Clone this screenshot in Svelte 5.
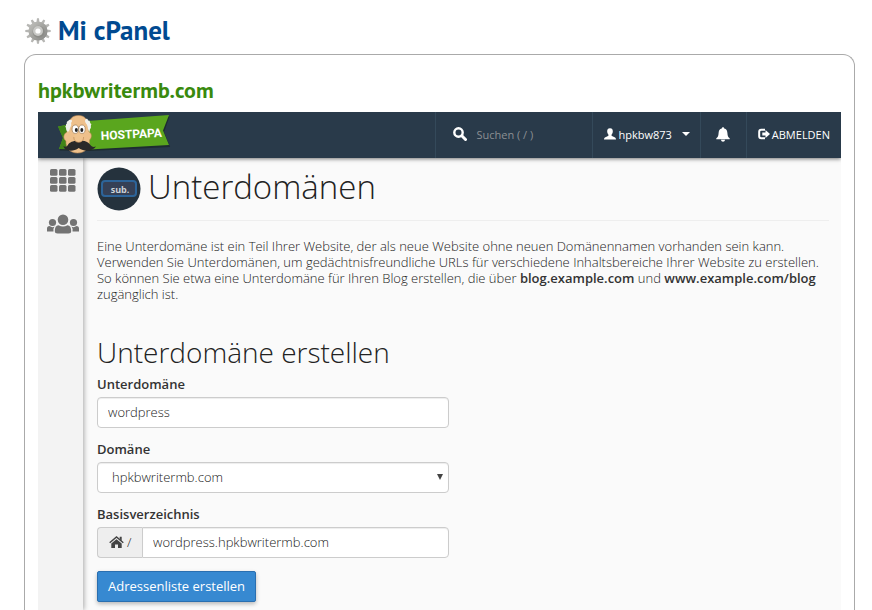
<svelte:options runes />

<script lang="ts">
  type Props = {
    domain?: string;
    user?: string;
  };
  let { domain = 'hpkbwritermb.com', user = 'hpkbw873' }: Props = $props();

  let subdomain = $state('wordpress');
  let root = $state('wordpress.hpkbwritermb.com');

  const teeth = Array.from({ length: 12 }, (_, i) => i * 30);
  const cells = [0, 9, 18];
</script>

<div class="page">
  <header class="title">
    <svg class="gear" viewBox="0 0 26 26" aria-hidden="true">
      <defs>
        <linearGradient id="metal" x1="0" y1="0" x2="1" y2="1">
          <stop offset="0" stop-color="#c4c4c0" />
          <stop offset="0.5" stop-color="#a3a39f" />
          <stop offset="1" stop-color="#858582" />
        </linearGradient>
      </defs>
      {#each teeth as angle}
        <path d="M11.4 5 L12 0.3 H14 L14.6 5Z" fill="#b6b6b3" transform="rotate({angle} 13 13)" />
      {/each}
      <circle cx="13" cy="13" r="9.6" fill="url(#metal)" />
      <circle cx="13.6" cy="13.8" r="6" fill="#83837f" opacity="0.6" />
      <circle cx="13" cy="13" r="5" fill="#c9c9c6" />
      <circle cx="13" cy="13" r="2.6" fill="#fff" />
    </svg>
    <h1>Mi cPanel</h1>
  </header>

  <section class="card">
    <h2 class="domain">{domain}</h2>

    <div class="panel">
      <nav class="topbar">
        <a class="brand" href="#home" aria-label="Home">
          <svg class="logo" viewBox="0 0 116 46">
            <path d="M2 15 L31 9 L113 3.5 L107.5 19 L113.5 34 L33 38 L3 37.5 L7 26Z" fill="#1d2c31" transform="translate(0.6 0.9)" />
            <path d="M2 14.5 L31 9 L113 3 L107 18.5 L113 33 L33 37.5 L3 37 L7 26Z" fill="#5aa61e" />
            <path d="M2 14.5 L12 13 V37 H3 L7 26Z" fill="#418518" />
            <path d="M13 14 C13 7 16 3.5 22.5 3.5 C29 3.5 32 8 32 14 L33 20 C36 21 36 26 33.5 28 C34 36 29 41 21.5 41 C14 41 9.5 36 10 29 C7 27 7 22 11 20Z" fill="#eec08b" stroke="#c18d58" stroke-width="0.6" />
            <path d="M12 20 C9 18 11 16 9 14.5 C11 14 9 12 11 11.5 C10 9 13 9 13 8 C16 7 17 9 15 11 C16 14 14 15 13.5 18Z" fill="#f1f1ed" />
            <path d="M29 9 C29 6 32 6 32 8.5 C35 8 33 11 35.5 12 C34 14 36 16 34 17 L33.5 20 C31.5 18 32 15 31 13 C31 12 29 11 29 9Z" fill="#f1f1ed" />
            <ellipse cx="19.3" cy="17.2" rx="3.2" ry="4.2" fill="#fff" stroke="#8a6a44" stroke-width="0.6" />
            <ellipse cx="26" cy="17.2" rx="3.2" ry="4.2" fill="#fff" stroke="#8a6a44" stroke-width="0.6" />
            <ellipse cx="20.3" cy="18" rx="1.5" ry="1.9" fill="#242424" />
            <ellipse cx="25.8" cy="18" rx="1.5" ry="1.9" fill="#242424" />
            <path d="M22.7 29.5 C17 28 13 31 11.5 33.5 C10.5 35 8.5 35 7.5 34 C8 39 17 40.5 22.7 36 C29 40.5 37 39 40 34.5 C37 35.5 35.5 34.5 34 32.5 C31 29 27 28 22.7 29.5Z" fill="#292929" />
            <ellipse cx="22.7" cy="26" rx="5" ry="4.3" fill="#f0c48f" />
            <path d="M17.8 25 Q17.8 30 22.7 30.3 Q27.6 30 27.6 25" fill="none" stroke="#bd8a58" stroke-width="0.7" />
            <text x="45" y="28" transform="rotate(-3 45 28)">HOSTPAPA</text>
          </svg>
        </a>
        <label class="item search">
          <svg class="glass" viewBox="0 0 14 14" aria-hidden="true">
            <circle cx="5.5" cy="5.5" r="4.2" fill="none" stroke="#fff" stroke-width="2.4" />
            <path d="M8.8 8.8 L12.5 12.5" stroke="#fff" stroke-width="3" stroke-linecap="round" />
          </svg>
          <input type="search" placeholder="Suchen ( / )" aria-label="Suchen" />
        </label>
        <button class="item user" type="button">
          <svg class="icon12" viewBox="0 0 12 12" aria-hidden="true">
            <path d="M6 0.3 C8.3 0.3 9 2 8.8 3.8 C8.7 5.3 8 6 7.5 6.8 C7.4 8 8 8.1 9.5 8.7 C11.2 9.3 12 9.7 12 11.5 H0 C0 9.7 0.8 9.3 2.5 8.7 C4 8.1 4.6 8 4.5 6.8 C4 6 3.3 5.3 3.2 3.8 C3 2 3.7 0.3 6 0.3Z" fill="#fff" />
          </svg>
          <span>{user}</span>
          <svg class="caret" viewBox="0 0 8 4" aria-hidden="true"><path d="M0 0H8L4 4Z" fill="#fff" /></svg>
        </button>
        <button class="item bell" type="button" aria-label="Benachrichtigungen">
          <svg viewBox="0 0 14 15">
            <path d="M7 0.3 C7.9 0.3 8.2 0.9 8.2 1.5 C10.5 2 11.3 3.8 11.4 6 C11.5 9 12.3 10.3 13.7 11.3 V12.3 H0.3 V11.3 C1.7 10.3 2.5 9 2.6 6 C2.7 3.8 3.5 2 5.8 1.5 C5.8 0.9 6.1 0.3 7 0.3Z M5 12.8 H9 C9 14 8 14.7 7 14.7 C6 14.7 5 14 5 12.8Z" fill="#fff" />
          </svg>
        </button>
        <a class="item logout" href="#logout">
          <svg class="icon12" viewBox="0 0 12 12" aria-hidden="true">
            <path d="M7 1.8 H3.2 Q1.2 1.8 1.2 3.8 V8.2 Q1.2 10.2 3.2 10.2 H7" fill="none" stroke="#fff" stroke-width="2" />
            <path d="M4.3 4.5 H7.5 V2 L12 6 L7.5 10 V7.5 H4.3Z" fill="#fff" />
          </svg>
          <span>ABMELDEN</span>
        </a>
      </nav>

      <div class="body">
        <aside class="sidebar">
          <a href="#apps" aria-label="Apps">
            <svg class="grid" viewBox="0 0 26 24">
              {#each cells as y}
                {#each cells as x}
                  <rect {x} y={y * 8 / 9} width="7.5" height="6.8" rx="1.5" fill="#737373" />
                {/each}
              {/each}
            </svg>
          </a>
          <a href="#users" aria-label="Users">
            <svg class="people" viewBox="0 0 32 20">
              <g fill="#737373">
                <circle cx="5.5" cy="8.5" r="3.6" />
                <circle cx="26.5" cy="8.5" r="3.6" />
                <path d="M0 17.5 V14.5 Q0 12 2.5 12 Q5.5 14 7.5 12.5 Q6 14.5 6.5 17.5Z" />
                <path d="M32 17.5 V14.5 Q32 12 29.5 12 Q26.5 14 24.5 12.5 Q26 14.5 25.5 17.5Z" />
                <circle cx="16" cy="5.8" r="5.3" />
                <path d="M7.8 17 Q7.8 11.5 11.5 11.2 Q16 14 20.5 11.2 Q24.2 11.5 24.2 17 Q24.2 19.5 21.5 19.5 H10.5 Q7.8 19.5 7.8 17Z" />
              </g>
            </svg>
          </a>
        </aside>

        <main>
          <div class="heading">
            <svg class="sub" viewBox="0 0 44 44" aria-hidden="true">
              <circle cx="22" cy="22" r="21.5" fill="#25323d" />
              <rect x="5" y="14" width="34" height="15" rx="3" fill="#354056" stroke="#2d6499" stroke-width="2" />
              <text x="23" y="26" text-anchor="middle">sub.</text>
            </svg>
            <h2>Unterdomänen</h2>
          </div>
          <p>
            Eine Unterdomäne ist ein Teil Ihrer Website, der als neue Website ohne neuen Domänennamen vorhanden sein kann.
            Verwenden Sie Unterdomänen, um gedächtnisfreundliche URLs für verschiedene Inhaltsbereiche Ihrer Website zu erstellen.
            So können Sie etwa eine Unterdomäne für Ihren Blog erstellen, die über <b>blog.example.com</b> und
            <b>www.example.com/blog</b> zugänglich ist.
          </p>

          <form onsubmit={(ev) => ev.preventDefault()}>
            <h3>Unterdomäne erstellen</h3>
            <label for="subdomain">Unterdomäne</label>
            <input id="subdomain" class="control" type="text" bind:value={subdomain} />

            <label for="domain">Domäne</label>
            <div class="select">
              <select id="domain" class="control">
                <option>{domain}</option>
              </select>
              <svg viewBox="0 0 6 6" aria-hidden="true"><path d="M0 0H6L3 6Z" fill="#444" /></svg>
            </div>

            <label for="root">Basisverzeichnis</label>
            <div class="group">
              <span class="addon">
                <svg viewBox="0 0 15 12" aria-hidden="true">
                  <path d="M0.7 6.7 L7.5 1 L14.3 6.7" fill="none" stroke="#444" stroke-width="1.5" />
                  <path d="M10.7 0.8 H12.7 V5 L10.7 3.3Z M7.5 3.2 L12.7 7.6 V12 H9 V8.5 H6 V12 H2.3 V7.6Z" fill="#444" />
                </svg>
                /
              </span>
              <input id="root" class="control" type="text" bind:value={root} />
            </div>

            <button class="submit" type="submit">Adressenliste erstellen</button>
          </form>
        </main>
      </div>
    </div>
  </section>
</div>

<style>
  :global(body) {
    background: #fff;
    overflow: hidden;
  }
  * {
    box-sizing: border-box;
  }
  h1,
  h2,
  h3,
  p {
    margin: 0;
  }
  svg {
    display: block;
    flex: none;
  }

  .page {
    height: 100vh;
    display: flex;
    flex-direction: column;
    padding: 8px 17px 0 24px;
    font-family: 'Open Sans', 'Liberation Sans', sans-serif;
    font-size: 13px;
    font-weight: 300;
    color: #222;
  }

  .title {
    display: flex;
    align-items: center;
    gap: 7px;
    height: 46px;
    padding-left: 1px;
    flex: none;
  }
  .gear {
    width: 26px;
    height: 26px;
  }
  h1 {
    padding-bottom: 2px;
    font: bold 27px/32px 'PT Sans', Lato, sans-serif;
    color: #004a91;
  }

  .card {
    flex: 1;
    min-height: 0;
    display: flex;
    flex-direction: column;
    padding: 23px 13px 0;
    border: 1px solid #aaa;
    border-bottom: 0;
    border-radius: 12px 12px 0 0;
  }
  .domain {
    flex: none;
    padding-bottom: 10px;
    font: bold 22px/24px 'PT Sans', Lato, sans-serif;
    color: #398a0e;
  }

  .panel {
    flex: 1;
    min-height: 0;
    display: flex;
    flex-direction: column;
    overflow: hidden;
    background: #fafafa;
  }

  .topbar {
    position: relative;
    z-index: 1;
    flex: none;
    display: flex;
    height: 46px;
    background: #293a4a;
    box-shadow: 0 1px 4px #0008;
  }
  .brand {
    margin-right: auto;
    padding-left: 18px;
  }
  .logo {
    width: 116px;
    height: 46px;
  }
  .logo text {
    font: bold 12px Roboto, sans-serif;
    fill: #fff;
  }
  .item {
    display: flex;
    align-items: center;
    border: 0;
    border-left: 1px solid #34495a;
    padding: 0 11px 2px;
    background: none;
    font: 11px 'Open Sans', sans-serif;
    color: #fff;
    text-decoration: none;
  }
  .search {
    width: 157px;
    padding-left: 17px;
    gap: 9px;
  }
  .search input {
    width: 100%;
    border: 0;
    padding: 0;
    outline: 0;
    background: none;
    font: 11px 'Open Sans', sans-serif;
    color: #fff;
  }
  .search input::placeholder {
    color: #8b8f93;
  }
  .glass {
    width: 14px;
    height: 14px;
  }
  .icon12 {
    width: 12px;
    height: 12px;
  }
  .user {
    padding-right: 10px;
    gap: 2px;
  }
  .caret {
    width: 8px;
    height: 4px;
    margin-left: 8px;
  }
  .bell {
    width: 46px;
    justify-content: center;
  }
  .bell svg {
    width: 14px;
    height: 15px;
  }
  .logout {
    gap: 2px;
  }

  .body {
    flex: 1;
    min-height: 0;
    display: flex;
  }
  .sidebar {
    flex: none;
    width: 45px;
    display: flex;
    flex-direction: column;
    align-items: center;
    gap: 21px;
    padding: 11px 0 0 5px;
    background: #f3f3f3;
    box-shadow: 1px 0 5px #0005;
  }
  .grid {
    width: 26px;
    height: 24px;
  }
  .people {
    width: 32px;
    height: 20px;
  }

  main {
    flex: 1;
    min-width: 0;
    padding: 0 12px 0 14px;
  }
  .heading {
    display: flex;
    align-items: center;
    gap: 7px;
    height: 63px;
    border-bottom: 1px solid #eee;
  }
  .heading h2 {
    padding-bottom: 4px;
    font-size: 33px;
    line-height: 40px;
    font-weight: 300;
    color: #222;
  }
  .sub {
    width: 44px;
    height: 44px;
  }
  .sub text {
    font: bold 9px 'Open Sans', sans-serif;
    fill: #ccd2d8;
  }
  p {
    padding-top: 17px;
    line-height: 16px;
  }
  b {
    font-weight: 600;
    color: #333;
  }

  form {
    display: flex;
    flex-direction: column;
    align-items: flex-start;
    padding-top: 31px;
  }
  h3 {
    padding-bottom: 4px;
    font-size: 28px;
    line-height: 38px;
    font-weight: 300;
    color: #222;
  }
  form label {
    padding-bottom: 4px;
    line-height: 18px;
    font-weight: 600;
    color: #333;
  }
  .control {
    width: 352px;
    max-width: 100%;
    height: 31px;
    margin-bottom: 12px;
    border: 1px solid #ccc;
    border-radius: 4px;
    padding: 0 10px 2px;
    background: #fff;
    box-shadow: inset 0 1px 1px #00000013;
    font: 300 13px 'Open Sans', sans-serif;
    color: #222;
  }
  .select {
    position: relative;
    max-width: 100%;
  }
  .select select {
    appearance: none;
    padding-left: 14px;
  }
  .select svg {
    position: absolute;
    top: 12px;
    right: 6px;
    width: 6px;
    height: 6px;
    pointer-events: none;
  }
  .group {
    display: flex;
    width: 352px;
    max-width: 100%;
    padding-bottom: 1px;
  }
  .addon {
    flex: none;
    display: flex;
    align-items: center;
    gap: 3px;
    height: 31px;
    width: 45px;
    padding: 0 0 2px 11px;
    border: 1px solid #ccc;
    border-right: 0;
    border-radius: 4px 0 0 4px;
    background: #eee;
  }
  .addon svg {
    width: 15px;
    height: 12px;
  }
  .group .control {
    flex: 1;
    min-width: 0;
    border-radius: 0 4px 4px 0;
  }
  .submit {
    height: 31px;
    border: 1px solid #2a6fb0;
    border-radius: 2px;
    padding: 0 10px 2px;
    background: #3789d1;
    box-shadow: 0 2px 4px #0004;
    font: 400 13px 'Open Sans', sans-serif;
    color: #fff;
  }
</style>
